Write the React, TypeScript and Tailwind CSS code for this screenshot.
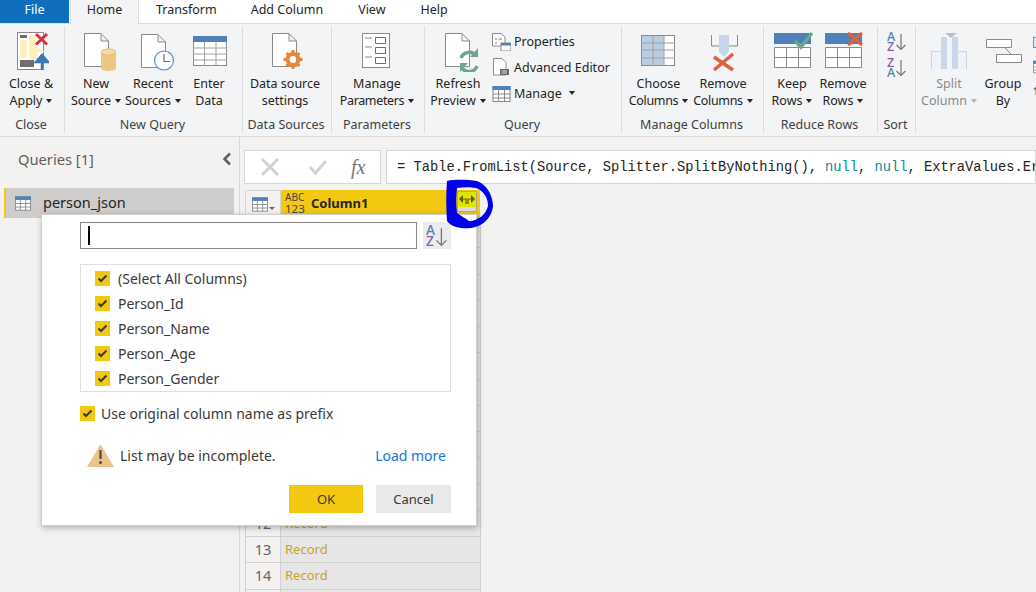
import React from "react";

const FONT = "font-['Noto_Sans','Open_Sans',sans-serif]";

function Caret({ light }: { light?: boolean }) {
  return (
    <span
      className={
        light
          ? "inline-block w-0 h-0 ml-[4px] mb-[2px] align-middle border-x-[3.500px] border-t-[4px] border-x-transparent border-t-[#b5b5b5]"
          : "inline-block w-0 h-0 ml-[4px] mb-[2px] align-middle border-x-[3.500px] border-t-[4px] border-x-transparent border-t-[#252423]"
      }
    />
  );
}

function Doc({ x, y, w = 25, h = 34 }: { x: number; y: number; w?: number; h?: number }) {
  return (
    <path
      d={`M${x + 0.5} ${y + 0.5}H${x + w - 8}L${x + w - 0.5} ${y + 8}V${y + h - 0.5}H${x + 0.5}ZM${x + w - 8} ${y + 0.5}V${y + 8}H${x + w - 0.5}`}
      fill="#fff"
      stroke="#8a8a8a"
    />
  );
}

function Big({
  left,
  w,
  a,
  b,
  caret,
  box,
  icon,
  muted,
  tight,
}: {
  left: number;
  w: number;
  a: string;
  b: string;
  caret?: boolean;
  box: [number, number, number, number];
  icon: React.ReactNode;
  muted?: boolean;
  tight?: boolean;
}) {
  const [x, y, bw, bh] = box;
  return (
    <div style={{ width: w }} className="flex flex-col items-center shrink-0">
      <div className="h-[48px] w-full">
        <svg
          width={bw}
          height={bh}
          viewBox={`${x} ${y} ${bw} ${bh}`}
          className="block"
          style={{ marginLeft: x - left, marginTop: y - 26 }}
        >
          {icon}
        </svg>
      </div>
      <div className={muted ? "mt-[1px] text-[#8a8886] text-center whitespace-nowrap leading-[17px]" : "mt-[1px] text-center whitespace-nowrap leading-[17px]"}>
        <div>{a}</div>
        <div>
          <span className={tight ? "tracking-[-0.35px]" : ""}>{b}</span>
          {caret && <Caret light={muted} />}
        </div>
      </div>
    </div>
  );
}

function Group({
  width,
  label,
  children,
  pl = 0,
}: {
  width: number;
  label: string;
  children: React.ReactNode;
  pl?: number;
}) {
  return (
    <div style={{ width }} className="h-[107px] shrink-0 border-r border-[#dcdcdc] flex flex-col">
      <div style={{ paddingLeft: pl }} className="h-[86px] flex">
        {children}
      </div>
      <div className="flex-1 text-center text-[#414141] leading-[17px] pt-[6px] pr-[2px] whitespace-nowrap">{label}</div>
    </div>
  );
}

function SortIcon({ first, second, tall }: { first: string; second: string; tall?: boolean }) {
  return (
    <svg width={tall ? 22 : 20} height={tall ? 22 : 20} viewBox="0 0 20 20" className="block">
      <text x="0" y="9.500" fontSize="12.500" fontWeight="500" fontFamily="Noto Sans" fill={first === "A" ? "#4f81b8" : "#8a5ca8"}>
        {first}
      </text>
      <text x="0" y="19.500" fontSize="12.500" fontWeight="500" fontFamily="Noto Sans" fill={second === "A" ? "#4f81b8" : "#8a5ca8"}>
        {second}
      </text>
      <path d="M14 3V18.500M9.500 14L14 18.500L18.500 14" fill="none" stroke="#767676" strokeWidth="1.200" />
    </svg>
  );
}

function Check() {
  return (
    <span className="w-[15px] h-[15px] bg-[#f2c811] flex items-center justify-center shrink-0">
      <svg width="11" height="9" viewBox="0 0 11 9">
        <path d="M1.500 4.500L4 7L9.500 1.500" fill="none" stroke="#3b3a39" strokeWidth="2" />
      </svg>
    </span>
  );
}

function TableIcon({ stroke = "#8a8a8a", blue = "#4f81b8", w = 18, h = 16 }: { stroke?: string; blue?: string; w?: number; h?: number }) {
  return (
    <svg width={w} height={h} viewBox="0 0 18 16" className="block shrink-0">
      <rect x=".5" y=".5" width="17" height="15" fill="#fff" stroke={stroke} />
      <rect x="0" y="0" width="18" height="4" fill={blue} />
      <path d="M0 8H18M0 12H18M6 4V16M12 4V16" stroke={stroke} strokeWidth="1" fill="none" />
    </svg>
  );
}

const rows = Array.from({ length: 15 }, (_, i) => i + 1);
const cols = ["(Select All Columns)", "Person_Id", "Person_Name", "Person_Age", "Person_Gender"];

export default function App() {
  return (
    <div className={`${FONT} relative w-[1036px] h-[592px] overflow-hidden bg-[#f3f2f1] text-[12.500px] text-[#252423]`}>
      {/* tabs */}
      <div className="h-[24px] bg-white flex items-start border-b border-[#dcdcdc] relative">
        <div className="w-[69px] h-[23px] bg-[#106ebe] text-white text-center leading-[19px]">File</div>
        <div className="w-[69px] h-[24px] bg-[#f3f4f6] border-x border-[#dcdcdc] text-center leading-[19px] ml-[1px] z-10">Home</div>
        <div className="ml-[17px] leading-[19px]">Transform</div>
        <div className="ml-[34px] leading-[19px]">Add Column</div>
        <div className="ml-[35px] leading-[19px]">View</div>
        <div className="ml-[35px] leading-[19px]">Help</div>
      </div>

      {/* ribbon */}
      <div className="h-[113px] bg-[#f3f4f6] border-b border-[#dedcda] flex overflow-hidden pt-[2px]">
        <Group width={65} label="Close">
          <Big
            left={0}
            w={62}
            a="Close &"
            b="Apply"
            caret
            box={[16, 30, 33, 41]}
            icon={
              <>
                <rect x="17.500" y="32.500" width="26" height="37" fill="#fff" stroke="#8a8a8a" />
                <rect x="20" y="35" width="7" height="3" fill="#6f6f6f" />
                <path d="M20 40H27V58H20ZM29 35H36V46L45 52H29Z" fill="#fdf0bd" />
                <path d="M29 52H38V59H29Z" fill="#fdf0bd" />
                <rect x="20" y="60" width="14" height="7" fill="#6f6f6f" />
                <path d="M36 34L47 44.500M47 34L36 44.500" stroke="#d13438" strokeWidth="3" />
                <path d="M42 70V58M42 55L36 62H48Z" stroke="#3f77b0" strokeWidth="2.500" fill="#3f77b0" />
              </>
            }
          />
        </Group>

        <Group width={178} label="New Query" pl={3}>
          <Big
            left={68}
            w={56}
            a="New"
            b="Source"
            caret
            box={[83, 32, 35, 40]}
            icon={
              <>
                <Doc x={84} y={33} />
                <path d="M101 52C101 47.500 116 47.500 116 52V68C116 72 101 72 101 68Z" fill="#edc77e" />
                <ellipse cx="108.500" cy="52" rx="7.500" ry="3" fill="#f5dba8" stroke="#d9b063" strokeWidth=".6" />
              </>
            }
          />
          <Big
            left={124}
            w={58}
            a="Recent"
            b="Sources"
            caret
            box={[140, 32, 35, 40]}
            icon={
              <>
                <Doc x={141} y={34} />
                <circle cx="164" cy="60.500" r="9.500" fill="#fff" stroke="#5b93cb" strokeWidth="1.200" />
                <path d="M164 54V61.500H170" fill="none" stroke="#6b6b6b" strokeWidth="1.200" />
              </>
            }
          />
          <Big
            left={182}
            w={54}
            a="Enter"
            b="Data"
            box={[192, 34, 36, 34]}
            icon={
              <>
                <rect x="193.500" y="36.500" width="33" height="29" fill="#fff" stroke="#8a8a8a" />
                <rect x="193" y="36" width="34" height="6" fill="#4f81b8" />
                <path d="M193 48H227M193 54H227M193 60H227M204.500 42V66M216 42V66" stroke="#a0a0a0" fill="none" />
              </>
            }
          />
        </Group>

        <Group width={89} label="Data Sources">
          <Big
            left={243}
            w={84}
            a="Data source"
            b="settings"
            box={[270, 32, 36, 40]}
            icon={
              <>
                <Doc x={272} y={33} />
                <circle cx="293" cy="59.500" r="5.500" fill="none" stroke="#e8853b" strokeWidth="4" />
                <path d="M293 50V53M293 66V69M283.500 59.500H286.500M299.500 59.500H302.500M286.500 53L288.500 55M297.500 64L299.500 66M299.500 53L297.500 55M288.500 64L286.500 66" stroke="#e8853b" strokeWidth="3" />
              </>
            }
          />
        </Group>

        <Group width={93} label="Parameters" pl={2}>
          <Big
            left={334}
            w={86}
            a="Manage"
            b="Parameters"
            caret
            tight
            box={[361, 32, 30, 38]}
            icon={
              <>
                <rect x="362.500" y="33.500" width="27" height="34" fill="#fff" stroke="#8a8a8a" />
                <path d="M365 38H372M365 47H372M365 57H372" stroke="#8a8a8a" />
                <path d="M375.500 37.500H385.500V43.500H375.500ZM375.500 47.500H385.500V53.500H375.500ZM375.500 57.500H385.500V63.500H375.500Z" fill="#fff" stroke="#3f77b0" />
              </>
            }
          />
        </Group>

        <Group width={197} label="Query">
          <Big
            left={425}
            w={66}
            a="Refresh"
            b="Preview"
            caret
            box={[444, 32, 36, 40]}
            icon={
              <>
                <Doc x={445} y={33} />
                <path d="M461 58A8.500 8.500 0 0 1 476 56M477 66A8.500 8.500 0 0 1 462 68" fill="none" stroke="#6fa58e" strokeWidth="3.500" />
                <path d="M478 50V59H470ZM460 74V65H468Z" fill="#6fa58e" transform="translate(0 -2)" />
              </>
            }
          />
          <div className="flex flex-col gap-[6px] pt-[6px] pl-[1px]">
            <div className="h-[20px] flex items-center gap-[3px]">
              <svg width="19" height="18" viewBox="0 0 19 18" className="block shrink-0">
                <path d="M.5 .5H9L13 4V13H.5Z" fill="#fff" stroke="#8a8a8a" />
                <path d="M3 6H5M3 10H5M6.500 6H10" stroke="#777" />
                <rect x="9" y="10" width="10" height="8" fill="#fff" stroke="#8a8a8a" />
                <rect x="9" y="10" width="10" height="2.500" fill="#4f81b8" />
              </svg>
              <span>Properties</span>
            </div>
            <div className="h-[20px] flex items-center gap-[3px]">
              <svg width="19" height="20" viewBox="0 0 19 20" className="block shrink-0">
                <path d="M1.500 .5H10L14 4.500V17H1.500Z" fill="#fff" stroke="#8a8a8a" />
                <rect x="8" y="11" width="9" height="6" fill="#666" />
                <path d="M9.500 13H15M9.500 15H15" stroke="#ddd" />
              </svg>
              <span>Advanced Editor</span>
            </div>
            <div className="h-[20px] flex items-center gap-[3px]">
              <TableIcon w={19} h={16} />
              <span>Manage</span>
              <Caret />
            </div>
          </div>
        </Group>

        <Group width={142} label="Manage Columns" pl={5}>
          <Big
            left={627}
            w={63}
            a="Choose"
            b="Columns"
            caret
            tight
            box={[640, 34, 36, 34]}
            icon={
              <>
                <rect x="641.500" y="35.500" width="33" height="30" fill="#fff" stroke="#8a8a8a" />
                <rect x="642" y="36" width="22" height="29" fill="#b9cde3" />
                <path d="M641 43H675M641 50H675M641 58H675M653 35V66M664 35V66" stroke="#a0a0a0" fill="none" />
              </>
            }
          />
          <Big
            left={690}
            w={66}
            a="Remove"
            b="Columns"
            caret
            tight
            box={[709, 33, 30, 39]}
            icon={
              <>
                <path d="M711.500 35V46H737.500V35" fill="none" stroke="#8a8a8a" />
                <path d="M719 35H729V52L724 57L719 52Z" fill="#c5d6e9" />
                <path d="M714 57L733 70M733 54L714 70" stroke="#e0603f" strokeWidth="3.500" />
              </>
            }
          />
        </Group>

        <Group width={114} label="Reduce Rows" pl={3}>
          <Big
            left={767}
            w={50}
            a="Keep"
            b="Rows"
            caret
            box={[773, 30, 40, 39]}
            icon={
              <>
                <rect x="774" y="33" width="37" height="11" fill="#4f81b8" />
                <path d="M774.500 47.500H810.500V67.500H774.500ZM774.500 57.500H810.500M786.500 47.500V67.500M798.500 47.500V67.500" fill="#fff" stroke="#8a8a8a" />
                <path d="M795 41L801 47L812 33" fill="none" stroke="#6fa58e" strokeWidth="3.500" />
              </>
            }
          />
          <Big
            left={817}
            w={52}
            a="Remove"
            b="Rows"
            caret
            box={[824, 30, 40, 39]}
            icon={
              <>
                <rect x="825" y="33" width="37" height="11" fill="#4f81b8" />
                <path d="M825.500 47.500H861.500V67.500H825.500ZM825.500 57.500H861.500M837.500 47.500V67.500M849.500 47.500V67.500" fill="#fff" stroke="#8a8a8a" />
                <path d="M848 33L862 45M862 33L848 45" stroke="#e0603f" strokeWidth="3" />
              </>
            }
          />
        </Group>

        <Group width={38} label="Sort" pl={9}>
          <div className="flex flex-col gap-[6px] pt-[5px]">
            <SortIcon first="A" second="Z" />
            <SortIcon first="Z" second="A" />
          </div>
        </Group>

        <div className="flex shrink-0">
          <Big
            left={916}
            w={66}
            a="Split"
            b="Column"
            caret
            muted
            box={[930, 32, 38, 38]}
            icon={
              <>
                <path d="M931.500 69V51.500H941.500V69M957.500 69V51.500H966.500V69" fill="#eef3fa" stroke="#c6d4e6" />
                <rect x="941" y="37" width="6" height="32" fill="#c9d7e8" />
                <rect x="952" y="37" width="6" height="32" fill="#c9d7e8" />
                <path d="M945 33H957L951 38Z" fill="#b8bfc9" />
              </>
            }
          />
          <Big
            left={982}
            w={42}
            a="Group"
            b="By"
            box={[985, 38, 38, 26]}
            icon={<path d="M986.500 39.500H1011.500V47.500H986.500ZM996.500 54.500H1021.500V62.500H996.500ZM1005 48L1011 54" fill="#fff" stroke="#8a8a8a" />}
          />
          <div className="ml-[9px] pt-[11px] flex flex-col gap-[11px]">
            <div className="w-[12px] h-[11px] border border-[#8a8a8a] bg-[#dfe9f5]" />
            <TableIcon w={14} h={16} />
            <div className="text-[10px] leading-[10px] font-bold text-[#555]">1</div>
          </div>
        </div>
      </div>

      {/* body */}
      <div className="flex h-[455px]">
        <aside className="w-[240px] shrink-0 border-r border-[#dad8d6] pt-[10px] pl-[4px] pr-[5px]">
          <div className="flex items-center justify-between pl-[14px] pr-[2px] h-[24px]">
            <span className="text-[14.700px] text-[#605e5c]">Queries [1]</span>
            <svg width="10" height="14" viewBox="0 0 10 14">
              <path d="M8 1.500L2.500 7L8 12.500" fill="none" stroke="#605e5c" strokeWidth="2.500" />
            </svg>
          </div>
          <div className="mt-[17px] h-[30px] bg-[#cfcdcb] border-l-2 border-[#f2c811] flex items-center pl-[9px] gap-[12px]">
            <TableIcon w={16} h={15} />
            <span className="text-[14.500px]">person_json</span>
          </div>
        </aside>

        <main className="flex-1 min-w-0 pl-[4px] overflow-hidden">
          <div className="flex pt-[13px] gap-[5px] h-[48px]">
            <div className="w-[137px] h-[34px] shrink-0 bg-white border border-[#d8d6d4] flex items-center">
              <svg width="50" height="20" viewBox="0 0 50 20" className="ml-[15px]">
                <path d="M2 2L18 18M18 2L2 18" stroke="#d2d2d2" strokeWidth="3" />
              </svg>
              <svg width="20" height="16" viewBox="0 0 20 16" className="ml-[-2px]">
                <path d="M2 8L7.500 14L18 2" fill="none" stroke="#d2d2d2" strokeWidth="3" />
              </svg>
              <span className="ml-[23px] font-['Liberation_Serif',serif] italic text-[20px] text-[#777]">fx</span>
            </div>
            <div className="flex-1 h-[34px] min-w-0 bg-white border border-[#d8d6d4] flex items-center pl-[10px] pt-[2px] font-['Liberation_Mono',monospace] text-[13.730px] whitespace-nowrap overflow-hidden">
              = Table.FromList(Source, Splitter.SplitByNothing(),&nbsp;
              <span className="text-[#098c9a]">null</span>,&nbsp;<span className="text-[#098c9a]">null</span>,&nbsp;ExtraValues.Error)
            </div>
          </div>

          <div className="w-[236px] mt-[5px] ml-[1px]">
            <div className="flex h-[28px]">
              <div className="w-[36px] shrink-0 bg-[#f3f2f1] border border-[#d8d6d4] flex items-center pl-[6px]">
                <TableIcon w={16} h={15} />
                <span className="ml-[1px] mt-[9px] w-0 h-0 border-x-[3px] border-t-[3px] border-x-transparent border-t-[#666]" />
              </div>
              <div className="w-[199px] bg-[#f2c811] flex items-center pl-[4px] relative">
                <div className="text-[10px] leading-[11px] text-[#444] w-[26px] mt-[-3px]">
                  <div>ABC</div>
                  <div className="text-[11.500px]">123</div>
                </div>
                <span className="font-bold text-[13px] mt-[-1px]">Column1</span>
                <div className="absolute right-[3px] top-[1px] w-[20px] h-[21px] border border-[#a9a98c] flex flex-col">
                  <div className="flex-1 bg-[#e3e300] flex items-center justify-center">
                    <svg width="16" height="10" viewBox="0 0 16 10">
                      <path d="M0 4L4 0V8ZM16 4L12 0V8Z" fill="#5f5a00" />
                      <path d="M4 4H7V9M12 4H9V9" fill="none" stroke="#5f5a00" strokeWidth="1.200" />
                    </svg>
                  </div>
                  <div className="h-[4px] bg-[#d8dce8]" />
                </div>
              </div>
            </div>
            <div className="h-[4px] flex justify-end">
              <div className="w-[3px] mr-[1px] bg-[#1fa6a0]" />
            </div>
            {rows.map((n) => (
              <div key={n} className="flex h-[26.270px]">
                <div className="w-[36px] shrink-0 border-x border-b border-[#d2d0ce] bg-[#f3f2f1] text-center text-[14.500px] text-[#666] leading-[25px]">{n}</div>
                <div className="w-[200px] border-r border-b border-[#d2d0ce] bg-[#e6e6e6] pl-[4px] text-[13px] text-[#c9a227] leading-[25px]">Record</div>
              </div>
            ))}
          </div>
        </main>
      </div>

      {/* dialog */}
      <div className="absolute left-[41px] top-[214px] w-[436px] h-[312px] bg-white border border-[#d0cfcd] shadow-[1px_2px_6px_rgba(0,0,0,0.28)] text-[14px] text-[#3b3a39] pl-[38px] pr-[25px] pt-[7px]">
        <div className="flex gap-[6px] h-[27px]">
          <div className="flex-1 border-[1.500px] border-[#8a8886] flex items-center pl-[7px]">
            <span className="w-[1.500px] h-[19px] bg-black" />
          </div>
          <div className="w-[28px] bg-[#ececec] flex items-center justify-center">
            <SortIcon first="A" second="Z" tall />
          </div>
        </div>
        <div className="mt-[15px] h-[128px] border border-[#e1dfdd] pl-[14px] pt-[1px]">
          {cols.map((c) => (
            <div key={c} className="h-[25px] flex items-center gap-[8px]">
              <Check />
              <span className="mt-[-1px]">{c}</span>
            </div>
          ))}
        </div>
        <div className="mt-[13px] h-[17px] flex items-center gap-[6px]">
          <Check />
          <span>Use original column name as prefix</span>
        </div>
        <div className="mt-[21px] h-[24px] flex items-center pl-[7px] pr-[5px]">
          <svg width="27" height="23" viewBox="0 0 27 23" className="shrink-0">
            <path d="M13.500 0L27 23H0Z" fill="#ecc489" />
            <path d="M13.500 6V15" stroke="#4a4a4a" strokeWidth="2.200" />
            <circle cx="13.500" cy="18.500" r="1.500" fill="#4a4a4a" />
          </svg>
          <span className="ml-[6px]">List may be incomplete.</span>
          <span className="ml-auto text-[#1873d3]">Load more</span>
        </div>
        <div className="mt-[18px] flex justify-end gap-[13px] text-[13px]">
          <div className="w-[74px] h-[28px] pt-[1px] bg-[#f2c811] flex items-center justify-center">OK</div>
          <div className="w-[75px] h-[28px] pt-[1px] bg-[#e9e9e9] flex items-center justify-center">Cancel</div>
        </div>
      </div>

      {/* hand-drawn annotation */}
      <svg className="absolute left-[440px] top-[175px]" width="60" height="60" viewBox="440 175 60 60">
        <path
          fillRule="evenodd"
          d="M447 181C456 179 468 180 477 181C486 184 493 195 493 206C492 217 483 227 470 228C461 229 451 227 447 221C446 208 446 194 447 181ZM457 188C464 187 471 187 476 188C484 191 488 198 488 206C486 214 479 221 469 221C465 218 460 215 457 213C456 205 456 196 457 188Z"
          fill="#0000e6"
        />
      </svg>
    </div>
  );
}
